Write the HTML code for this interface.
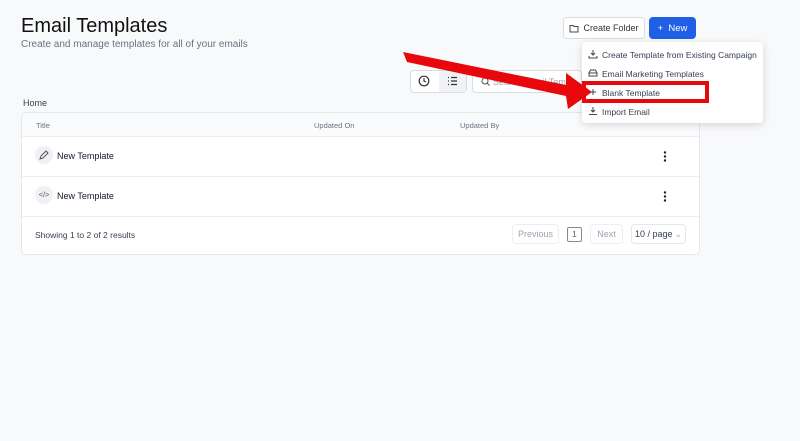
<!DOCTYPE html>
<html><head><style>
*{box-sizing:border-box;margin:0;padding:0}
body{width:800px;height:441px;background:#f8f9fb;font-family:"Liberation Sans",sans-serif;color:#111827;position:relative;overflow:hidden}
.a{position:absolute}
.btn{position:absolute;border:1px solid #d8dce3;border-radius:4px;background:#fff;font-size:9px;display:flex;align-items:center;justify-content:center}
.card{position:absolute;left:21px;top:112px;width:679px;height:143px;background:#fff;border:1px solid #e5e7eb;border-radius:5px}
.row{position:absolute;left:0;right:0;border-bottom:1px solid #eceef1}
.menu{position:absolute;left:582px;top:42px;width:181px;height:81px;background:#fff;border-radius:4px;box-shadow:0 2px 8px rgba(0,0,0,.15)}
.mi{position:absolute;left:20px;font-size:8.5px;color:#374151}
.ic{position:absolute;left:6px}
</style></head><body>
<div class="a" style="left:21px;top:15px;font-size:20px;color:#111">Email Templates</div>
<div class="a" style="left:21px;top:39px;font-size:10px;color:#6b7280">Create and manage templates for all of your emails</div>
<div class="btn" style="left:563px;top:17px;width:82px;height:22px;color:#333"><svg width="10" height="9" viewBox="0 0 10 9" style="margin-right:4px"><path d="M1 1.5h3l1 1h4v5.5H1z" fill="none" stroke="#444" stroke-width="1"/></svg>Create Folder</div>
<div class="btn" style="left:649px;top:17px;width:47px;height:22px;background:#1f5fe6;border-color:#1f5fe6;color:#fff;font-size:9.5px">+&nbsp; New</div>
<div class="btn" style="left:410px;top:70px;width:57px;height:23px;background:#fff"></div>
<div class="a" style="left:439px;top:71px;width:27px;height:21px;background:#f0f2f5"></div>
<svg class="a" style="left:418px;top:75px" width="12" height="12" viewBox="0 0 12 12"><circle cx="6" cy="6" r="4.8" fill="none" stroke="#333" stroke-width="1.2"/><path d="M6 3.3V6l1.8 1" fill="none" stroke="#333" stroke-width="1.2"/></svg>
<svg class="a" style="left:447px;top:76px" width="11" height="10" viewBox="0 0 11 10"><path d="M1 1.5h1M1 5h1M1 8.5h1M4 1.5h6M4 5h6M4 8.5h6" stroke="#333" stroke-width="1.2"/></svg>
<div class="btn" style="left:472px;top:70px;width:110px;height:23px;justify-content:flex-start;padding-left:8px;color:#9ca3af"><svg width="9" height="9" viewBox="0 0 9 9" style="margin-right:3px"><circle cx="4" cy="4" r="3" fill="none" stroke="#555" stroke-width="1"/><path d="M6 6l2.5 2.5" stroke="#555"/></svg>Search Email Templ</div>
<div class="a" style="left:23px;top:98px;font-size:9px;color:#374151">Home</div>
<div class="card">
<div class="row" style="top:0;height:24px;background:#fafbfc;border-radius:5px 5px 0 0"></div>
<div class="a" style="left:14px;top:8px;font-size:7.5px;color:#6b7280">Title</div>
<div class="a" style="left:292px;top:8px;font-size:7.5px;color:#6b7280">Updated On</div>
<div class="a" style="left:438px;top:8px;font-size:7.5px;color:#6b7280">Updated By</div>
<div class="row" style="top:24px;height:40px"></div>
<div class="row" style="top:64px;height:40px"></div>
<div class="a" style="left:13px;top:33px;width:18px;height:18px;border-radius:50%;background:#f0f1f4"></div>
<svg class="a" style="left:16px;top:36px" width="12" height="12" viewBox="0 0 12 12"><path d="M2 10l1-3 5-5 2 2-5 5z" fill="none" stroke="#555" stroke-width="1"/></svg>
<div class="a" style="left:35px;top:38px;font-size:9px">New Template</div>
<div class="a" style="left:13px;top:73px;width:18px;height:18px;border-radius:50%;background:#f0f1f4;font-size:7.5px;text-align:center;line-height:18px;color:#555">&lt;/&gt;</div>
<div class="a" style="left:35px;top:78px;font-size:9px">New Template</div>
<svg class="a" style="left:640px;top:38px" width="6" height="11"><circle cx="3" cy="1.5" r="1.2" fill="#222"/><circle cx="3" cy="5.5" r="1.2" fill="#222"/><circle cx="3" cy="9.5" r="1.2" fill="#222"/></svg>
<svg class="a" style="left:640px;top:78px" width="6" height="11"><circle cx="3" cy="1.5" r="1.2" fill="#222"/><circle cx="3" cy="5.5" r="1.2" fill="#222"/><circle cx="3" cy="9.5" r="1.2" fill="#222"/></svg>
<div class="a" style="left:13px;top:117px;font-size:8.5px;color:#374151">Showing 1 to 2 of 2 results</div>
</div>
<div class="btn" style="left:512px;top:224px;width:47px;height:20px;color:#9ca3af;border-color:#eceef1">Previous</div>
<div class="btn" style="left:567px;top:227px;width:15px;height:15px;color:#555;border-color:#888;border-radius:2px;font-size:8px">1</div>
<div class="btn" style="left:590px;top:224px;width:33px;height:20px;color:#9ca3af;border-color:#eceef1">Next</div>
<div class="btn" style="left:631px;top:224px;width:55px;height:20px;color:#374151;border-color:#e5e7eb">10 / page <span style="color:#aaa;margin-left:2px">⌄</span></div>
<div class="menu">
<svg class="ic" style="top:7px" width="10" height="10" viewBox="0 0 10 10"><path d="M5 1v5M3 4l2 2 2-2M1 7v2h8V7" fill="none" stroke="#444"/></svg><div class="mi" style="top:8px">Create Template from Existing Campaign</div>
<svg class="ic" style="top:26px" width="10" height="10" viewBox="0 0 10 10"><path d="M1 5l1.5-3h5L9 5v3H1zM1 5h8" fill="none" stroke="#444"/></svg><div class="mi" style="top:27px">Email Marketing Templates</div>
<svg class="ic" style="top:45px" width="10" height="10" viewBox="0 0 10 10"><path d="M5 2v6M2 5h6" stroke="#444"/></svg><div class="mi" style="top:46px">Blank Template</div>
<svg class="ic" style="top:64px" width="10" height="10" viewBox="0 0 10 10"><path d="M5 1v5M3 4l2 2 2-2M1 8.5h8" fill="none" stroke="#444"/></svg><div class="mi" style="top:65px">Import Email</div>
</div>
<div class="a" style="left:582px;top:81px;width:127px;height:22px;border:4px solid #e8080c"></div>
<svg class="a" style="left:0;top:0" width="800" height="441"><path d="M403 52 L407 62 L566 96 L568 109 L592 92 L566 73 L566 85 Z" fill="#e8080c"/></svg>
</body></html>
